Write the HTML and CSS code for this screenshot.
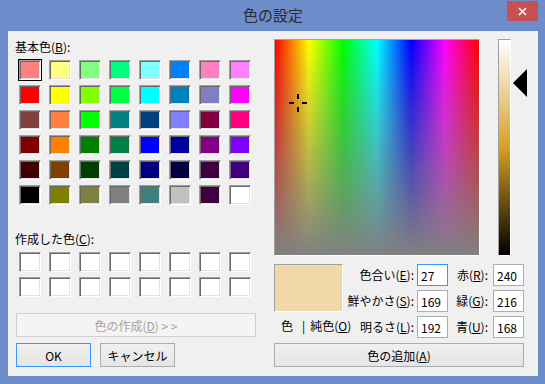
FILE: index.html
```html
<!DOCTYPE html>
<html lang="ja">

<head>
    <meta charset="UTF-8">
    <meta name="viewport" content="width=device-width, initial-scale=1.0">
    <title>色の設定</title>
    <link rel="stylesheet" href="styles.css">
</head>

<body>
    <div class="window">
        <div class="titlebar">
            <span></span>
            <span class="title">色の設定</span>
            <span class="close">
                <svg width="9" height="9" viewBox="0 0 9 9">
                    <path d="M1 1L8 8M8 1L1 8" stroke="#fff" stroke-width="1.6" />
                </svg>
            </span>
        </div>

        <div class="client">
            <div class="left">
                <div class="label">基本色(<u>B</u>):</div>
                <div class="swatches">
                    <span class="sw sel" style="background:#ff8080"></span>
                    <span class="sw" style="background:#ffff80"></span>
                    <span class="sw" style="background:#80ff80"></span>
                    <span class="sw" style="background:#00ff80"></span>
                    <span class="sw" style="background:#80ffff"></span>
                    <span class="sw" style="background:#0080ff"></span>
                    <span class="sw" style="background:#ff80c0"></span>
                    <span class="sw" style="background:#ff80ff"></span>

                    <span class="sw" style="background:#ff0000"></span>
                    <span class="sw" style="background:#ffff00"></span>
                    <span class="sw" style="background:#80ff00"></span>
                    <span class="sw" style="background:#00ff40"></span>
                    <span class="sw" style="background:#00ffff"></span>
                    <span class="sw" style="background:#0080c0"></span>
                    <span class="sw" style="background:#8080c0"></span>
                    <span class="sw" style="background:#ff00ff"></span>

                    <span class="sw" style="background:#804040"></span>
                    <span class="sw" style="background:#ff8040"></span>
                    <span class="sw" style="background:#00ff00"></span>
                    <span class="sw" style="background:#008080"></span>
                    <span class="sw" style="background:#004080"></span>
                    <span class="sw" style="background:#8080ff"></span>
                    <span class="sw" style="background:#800040"></span>
                    <span class="sw" style="background:#ff0080"></span>

                    <span class="sw" style="background:#800000"></span>
                    <span class="sw" style="background:#ff8000"></span>
                    <span class="sw" style="background:#008000"></span>
                    <span class="sw" style="background:#008040"></span>
                    <span class="sw" style="background:#0000ff"></span>
                    <span class="sw" style="background:#0000a0"></span>
                    <span class="sw" style="background:#800080"></span>
                    <span class="sw" style="background:#8000ff"></span>

                    <span class="sw" style="background:#400000"></span>
                    <span class="sw" style="background:#804000"></span>
                    <span class="sw" style="background:#004000"></span>
                    <span class="sw" style="background:#004040"></span>
                    <span class="sw" style="background:#000080"></span>
                    <span class="sw" style="background:#000040"></span>
                    <span class="sw" style="background:#400040"></span>
                    <span class="sw" style="background:#400080"></span>

                    <span class="sw" style="background:#000000"></span>
                    <span class="sw" style="background:#808000"></span>
                    <span class="sw" style="background:#808040"></span>
                    <span class="sw" style="background:#808080"></span>
                    <span class="sw" style="background:#408080"></span>
                    <span class="sw" style="background:#c0c0c0"></span>
                    <span class="sw" style="background:#400040"></span>
                    <span class="sw" style="background:#ffffff"></span>
                </div>

                <div class="label custom-label">作成した色(<u>C</u>):</div>
                <div class="swatches custom">
                    <span class="sw"></span><span class="sw"></span><span class="sw"></span><span class="sw"></span>
                    <span class="sw"></span><span class="sw"></span><span class="sw"></span><span class="sw"></span>
                    <span class="sw"></span><span class="sw"></span><span class="sw"></span><span class="sw"></span>
                    <span class="sw"></span><span class="sw"></span><span class="sw"></span><span class="sw"></span>
                </div>

                <button class="btn define" disabled>色の作成(<u>D</u>) &gt; &gt;</button>
                <div class="btn-row">
                    <button class="btn ok">OK</button>
                    <button class="btn">キャンセル</button>
                </div>
            </div>

            <div class="right">
                <div class="picker">
                    <div class="spectrum">
                        <!-- hue 27, sat 169 -->
                        <svg class="cross" style="left:13px; top:53px" width="21" height="21" viewBox="0 0 21 21">
                            <rect x="9" y="1" width="2" height="5" />
                            <rect x="9" y="14" width="2" height="5" />
                            <rect x="1" y="9" width="5" height="2" />
                            <rect x="14" y="9" width="5" height="2" />
                        </svg>
                    </div>
                    <div class="lum-wrap">
                        <div class="lum"></div>
                        <!-- lum 192 -->
                        <svg class="arrow" style="top:30px" width="14" height="28" viewBox="0 0 14 28">
                            <path d="M0 14L14 0V28Z" />
                        </svg>
                    </div>
                </div>

                <div class="values">
                    <div class="preview-col">
                        <div class="preview"></div>
                        <div class="solid">
                            <span>色</span>
                            <span class="bar">|</span>
                            <span>純色(<u>O</u>)</span>
                        </div>
                    </div>
                    <div class="fields">
                        <label>色合い(<u>E</u>):</label>
                        <input class="focus" type="text" value="27">
                        <label>赤(<u>R</u>):</label>
                        <input type="text" value="240">

                        <label>鮮やかさ(<u>S</u>):</label>
                        <input type="text" value="169">
                        <label>緑(<u>G</u>):</label>
                        <input type="text" value="216">

                        <label>明るさ(<u>L</u>):</label>
                        <input type="text" value="192">
                        <label>青(<u>U</u>):</label>
                        <input type="text" value="168">
                    </div>
                </div>

                <button class="btn add">色の追加(<u>A</u>)</button>
            </div>
        </div>
    </div>
</body>

</html>
```

FILE: styles.css
```css
body,
html {
    margin: 0;
    padding: 0;
    background: #6d8dca;
}

body {
    font-family: "Noto Sans CJK JP", sans-serif;
    font-size: 12px;
    color: #000;
}

u {
    text-underline-offset: 1px;
}

.window {
    width: 545px;
    height: 384px;
    box-sizing: border-box;
    padding: 0 7px 8px 8px;
    display: flex;
    flex-direction: column;
}

.titlebar {
    height: 31px;
    display: grid;
    grid-template-columns: 1fr auto 1fr;
    align-items: start;
}

.title {
    font-size: 15px;
    line-height: 30px;
    color: #2b2b2b;
}

.close {
    justify-self: end;
    width: 31px;
    height: 20px;
    margin-top: 1px;
    background: #c75050;
    display: flex;
    align-items: center;
    justify-content: center;
}

.client {
    flex: 1;
    background: #f0f0f0;
    display: flex;
    gap: 18px;
    padding: 8px 0 0 8px;
}

.left {
    width: 240px;
}

.label {
    height: 15px;
    line-height: 15px;
    margin-left: -1px;
    white-space: nowrap;
}

.swatches {
    display: grid;
    grid-template-columns: repeat(8, 22px);
    grid-auto-rows: 20px;
    column-gap: 8px;
    row-gap: 5px;
    margin: 6px 0 0 3px;
}

.sw {
    box-sizing: border-box;
    background: #fff;
    border: 1px solid;
    border-color: #a0a0a0 #fff #fff #a0a0a0;
    box-shadow: inset 1px 1px #696969, inset -1px -1px #e3e3e3;
}

.sw.sel {
    outline: 1px solid #000;
}

.custom-label {
    margin-top: 26px;
}

.btn {
    display: block;
    box-sizing: border-box;
    height: 24px;
    padding: 0;
    font-family: inherit;
    font-size: 12px;
    color: #000;
    border: 1px solid #acacac;
    background: linear-gradient(#f0f0f0, #e5e5e5);
}

.btn.define {
    width: 240px;
    margin-top: 16px;
    color: #a3a3a3;
    border-color: #d0d0d0;
    background: #f4f4f4;
}

.btn-row {
    display: flex;
    gap: 9px;
    margin-top: 6px;
}

.btn-row .btn {
    width: 75px;
}

.btn.ok {
    border-color: #3399ff;
}

.right {
    width: 253px;
    display: flex;
    flex-direction: column;
}

.picker {
    display: flex;
    height: 217px;
}

.spectrum {
    position: relative;
    width: 206px;
    height: 217px;
    box-sizing: border-box;
    border: 1px solid;
    border-color: #a0a0a0 #fff #fff #a0a0a0;
    background:
        linear-gradient(to bottom, rgba(128, 128, 128, 0), #808080),
        linear-gradient(to right, #f00, #ff0, #0f0, #0ff, #00f, #f0f, #f00);
}

.cross {
    position: absolute;
    fill: #000;
}

.lum-wrap {
    position: relative;
    margin-left: 18px;
}

.lum {
    width: 13px;
    height: 217px;
    box-sizing: border-box;
    border: 1px solid;
    border-color: #a0a0a0 #fff #fff #a0a0a0;
    background: linear-gradient(to bottom, #fff, #d99f26, #000);
}

.arrow {
    position: absolute;
    left: 15px;
    fill: #000;
}

.values {
    display: flex;
    margin-top: 8px;
}

.preview-col {
    width: 69px;
}

.preview {
    height: 48px;
    box-sizing: border-box;
    border: 1px solid;
    border-color: #a0a0a0 #fff #fff #a0a0a0;
    background: #f0d8a8;
}

.solid {
    display: flex;
    margin-top: 6px;
    padding-left: 7px;
    line-height: 15px;
    white-space: nowrap;
}

.solid .bar {
    margin: 0 5px 0 9px;
}

.fields {
    display: grid;
    grid-template-columns: 74px 31px 45px 31px;
    grid-auto-rows: 22px;
    row-gap: 4px;
}

.fields label {
    text-align: right;
    line-height: 22px;
    padding-right: 3px;
    white-space: nowrap;
}

.fields label:nth-child(4n+3) {
    padding-right: 5px;
}

.fields input {
    box-sizing: border-box;
    width: 31px;
    height: 22px;
    margin: 0;
    padding: 0 3px;
    border: 1px solid #abadb3;
    background: #fff;
    font-family: inherit;
    font-size: 12px;
    color: #000;
    outline: none;
}

.fields input.focus {
    border-color: #3399ff;
}

.btn.add {
    width: 250px;
    margin-top: 5px;
}
```
